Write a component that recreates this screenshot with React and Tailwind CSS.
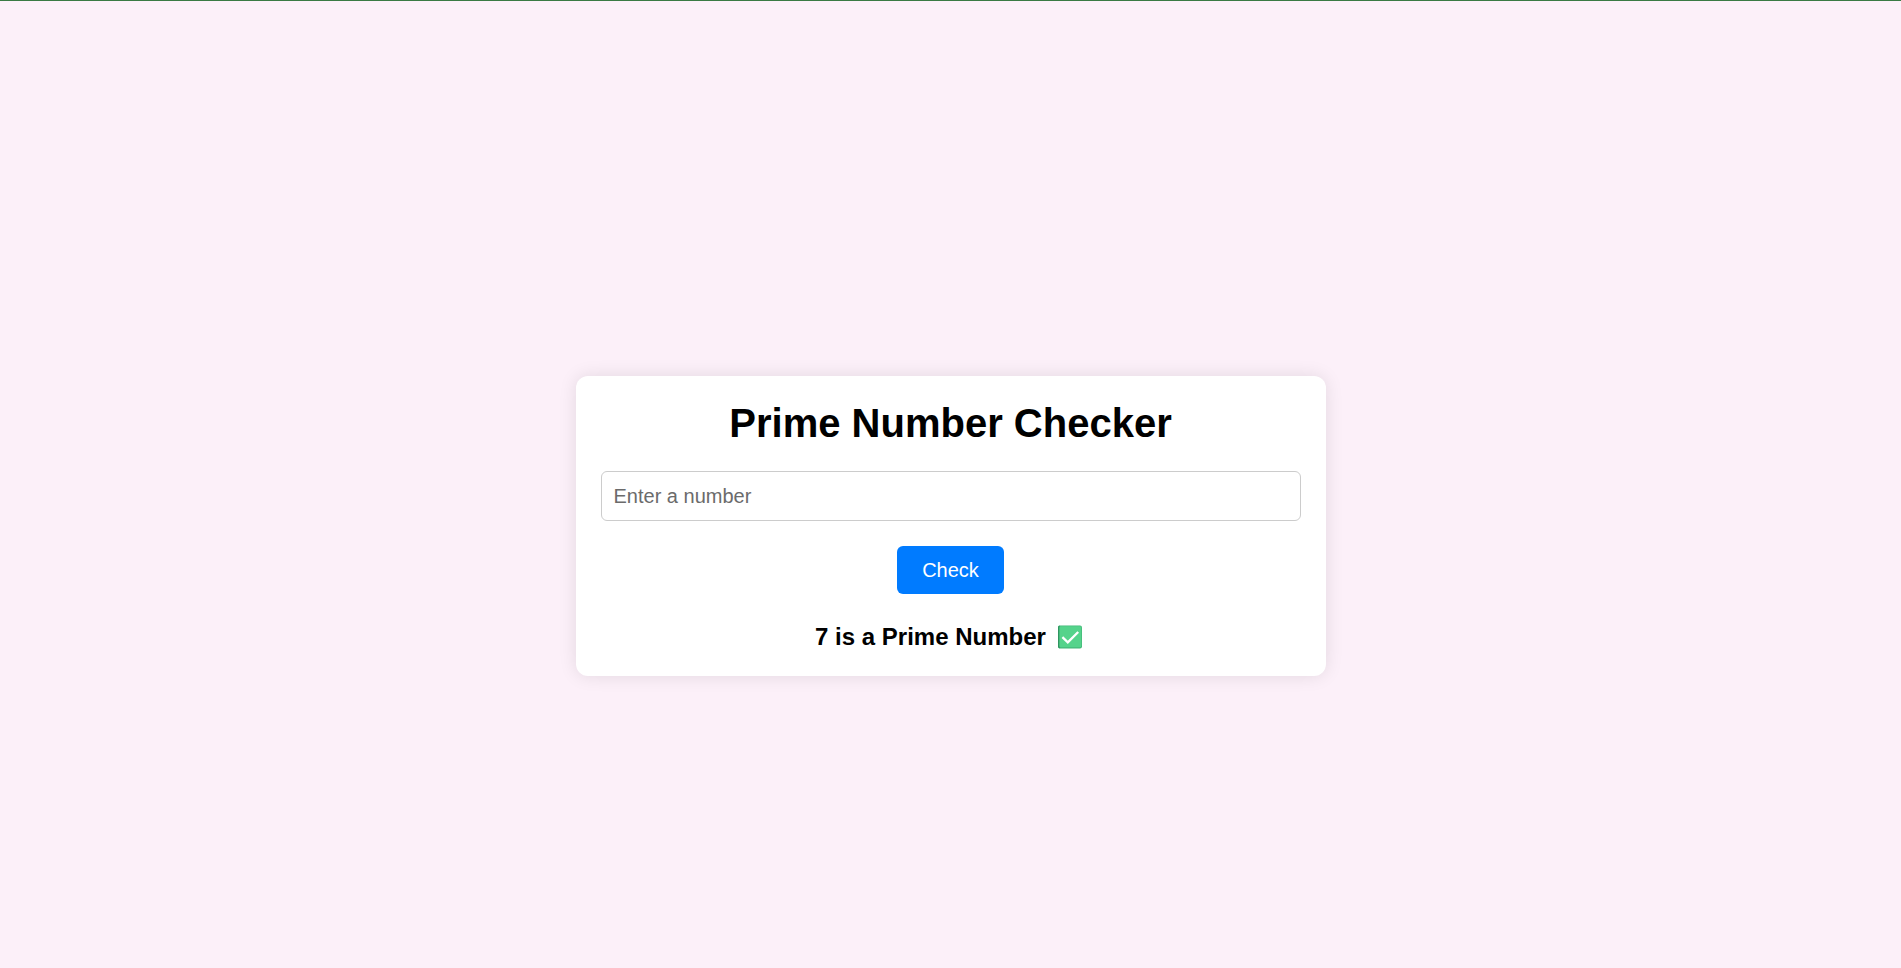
import { useState } from "react";

function isPrime(n) {
  if (!Number.isInteger(n) || n < 2) return false;
  for (let i = 2; i * i <= n; i++) {
    if (n % i === 0) return false;
  }
  return true;
}

function CheckMark() {
  return (
    <svg viewBox="0 0 24 24" className="mx-1 size-6 shrink-0" role="img" aria-label="Yes">
      <rect x="0" y="0.4" width="24" height="23.2" rx="2" fill="#43b878" />
      <path d="M0 2.4Q0 .6 1.8 .6V23.4Q0 23.4 0 21.6Z" fill="#2f9560" />
      <rect x="1.4" y="1.3" width="21.9" height="21" rx="1.4" fill="#55d38b" />
      <path d="M4.4 12.2L9.8 17.4L20.2 7" fill="none" stroke="#fff" strokeWidth="2.3" />
    </svg>
  );
}

export default function App() {
  const [value, setValue] = useState("");
  const [checked, setChecked] = useState(7);
  const prime = isPrime(checked);

  function handleSubmit(event) {
    event.preventDefault();
    if (value !== "") setChecked(Number(value));
  }

  return (
    <main className="flex min-h-screen flex-col items-center justify-center border-t border-[#3a7a44] bg-[#fcf0f9] px-6 pt-[83px] font-['Liberation_Sans',Arial,sans-serif] text-black">
      <section className="w-full max-w-[750px] rounded-xl bg-white p-[25px] text-center shadow-[0_0_18px_rgba(0,0,0,0.1)]">
        <h1 className="text-[40px] leading-[45px] font-bold">Prime Number Checker</h1>
        <form onSubmit={handleSubmit} className="mt-[25px] flex flex-col items-center gap-[25px]">
          <input
            type="text"
            inputMode="numeric"
            aria-label="Enter a number"
            placeholder="Enter a number"
            value={value}
            onChange={(event) => setValue(event.target.value)}
            className="h-[50px] w-full rounded-md border border-[#cccccc] px-3 text-xl placeholder:text-[#6b6b6b]"
          />
          <button
            type="submit"
            className="h-12 cursor-pointer rounded-md bg-[#007bff] px-[25px] text-xl text-white"
          >
            Check
          </button>
        </form>
        <p className="mt-7 flex items-center justify-center gap-2 text-2xl leading-[29px] font-bold">
          <span>
            {checked} is {prime ? "a" : "not a"} Prime Number
          </span>
          {prime && <CheckMark />}
        </p>
      </section>
    </main>
  );
}
